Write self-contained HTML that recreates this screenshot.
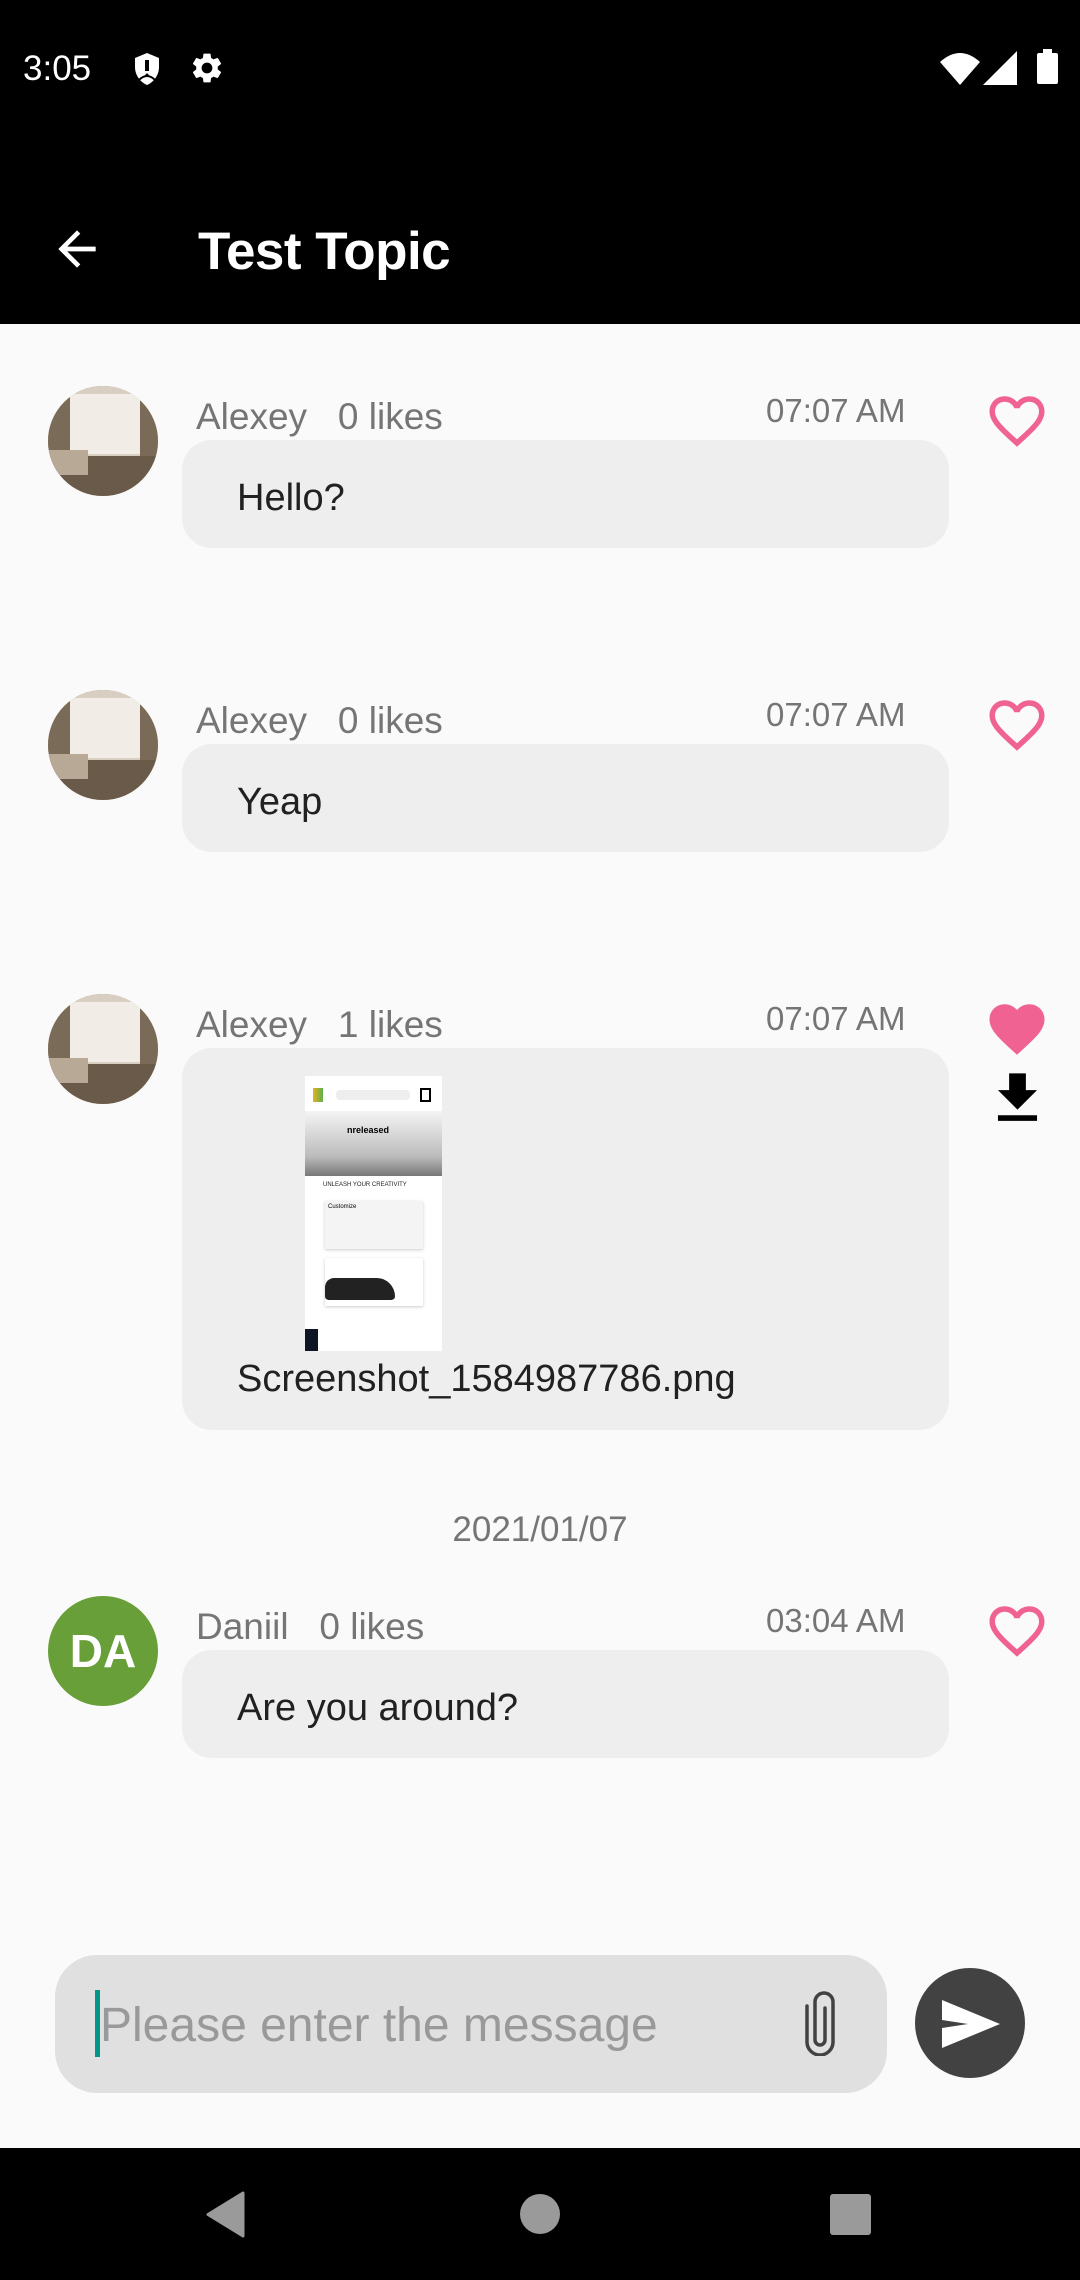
<!DOCTYPE html>
<html><head><meta charset="utf-8"><style>
*{margin:0;padding:0;box-sizing:border-box}
body{width:1080px;height:2280px;background:#fafafa;font-family:"Liberation Sans",sans-serif;position:relative;overflow:hidden}
.a{position:absolute;line-height:1;white-space:nowrap}
.av{position:absolute;left:48px;width:110px;height:110px;border-radius:50%;overflow:hidden;background:#8a7a66}
.av i{position:absolute;display:block}
.name{font-size:37px;color:#757575;left:196px}
.time{font-size:33px;color:#757575;left:766px}
.bub{position:absolute;left:182px;width:767px;background:#eeeeee;border-radius:30px}
.msg{font-size:38px;color:#212121;left:237px}
</style></head><body>
<div style="position:absolute;left:0;top:0;width:1080px;height:324px;background:#000"></div>
<div class="a" style="left:23px;top:51px;font-size:35px;color:#fff">3:05</div>
<svg style="position:absolute;left:133px;top:52px" width="28" height="34" viewBox="0 0 28 34"><path d="M14 1L2 6v9c0 8 5 15 12 18 7-3 12-10 12-18V6z" fill="#fff"/><rect x="12" y="8" width="4" height="11" fill="#000"/><path d="M6 28 Q14 20 22 28" stroke="#000" stroke-width="2" fill="none"/><circle cx="14" cy="23" r="1.5" fill="#000"/></svg>
<svg style="position:absolute;left:189px;top:50px" width="36" height="36" viewBox="0 0 24 24"><path fill="#fff" d="M19.14 12.94c.04-.3.06-.61.06-.94 0-.32-.02-.64-.07-.94l2.030-1.58a.49.49 0 0 0 .12-.61l-1.92-3.32a.49.49 0 0 0-.59-.22l-2.39.96c-.5-.38-1.03-.7-1.62-.94l-.36-2.54a.48.48 0 0 0-.48-.41h-3.84c-.24 0-.43.17-.47.41l-.36 2.54c-.59.24-1.13.57-1.62.94l-2.39-.96a.48.48 0 0 0-.59.22L2.74 8.87c-.12.21-.08.47.12.61l2.03 1.58c-.05.3-.09.63-.09.94s.02.64.07.94l-2.03 1.58a.49.49 0 0 0-.12.61l1.92 3.32c.12.22.37.29.59.22l2.39-.96c.5.38 1.03.7 1.62.94l.36 2.54c.05.24.24.41.48.41h3.84c.24 0 .44-.17.47-.41l.36-2.54c.59-.24 1.13-.56 1.62-.94l2.39.96c.22.08.47 0 .59-.22l1.92-3.32c.12-.22.07-.47-.12-.61l-2.01-1.58zM12 15.6c-1.98 0-3.6-1.62-3.6-3.6s1.62-3.6 3.6-3.6 3.6 1.62 3.6 3.6-1.62 3.6-3.6 3.6z"/></svg>
<svg style="position:absolute;left:940px;top:50px" width="40" height="35" viewBox="0 0 40 35"><path d="M0 12 Q20 -6 40 12 L20 35z" fill="#fff"/></svg>
<svg style="position:absolute;left:983px;top:51px" width="34" height="34" viewBox="0 0 34 34"><path d="M0 34L34 0V34z" fill="#fff"/></svg>
<div style="position:absolute;left:1037px;top:53px;width:21px;height:31px;background:#fff;border-radius:2px"></div>
<div style="position:absolute;left:1043px;top:49px;width:9px;height:5px;background:#fff"></div>
<svg style="position:absolute;left:49px;top:221px" width="56" height="56" viewBox="0 0 24 24"><path fill="#fff" d="M20 11H7.83l5.59-5.59L12 4l-8 8 8 8 1.41-1.41L7.83 13H20v-2z"/></svg>
<div class="a" style="left:198px;top:225px;font-size:53px;color:#fff;font-weight:bold;letter-spacing:-0.5px">Test Topic</div>

<!-- avatars -->
<div class="av" style="top:386px"><i style="left:0;top:0;width:110px;height:110px;background:#d8cfc2"></i><i style="left:22px;top:8px;width:70px;height:60px;background:#f1ece6"></i><i style="left:0;top:10px;width:22px;height:60px;background:#7a6a58"></i><i style="left:92px;top:10px;width:18px;height:60px;background:#7a6a58"></i><i style="left:0;top:70px;width:110px;height:40px;background:#6a5a4a"></i><i style="left:0;top:64px;width:40px;height:25px;background:#b7a995"></i></div>
<div class="av" style="top:690px"><i style="left:0;top:0;width:110px;height:110px;background:#d8cfc2"></i><i style="left:22px;top:8px;width:70px;height:60px;background:#f1ece6"></i><i style="left:0;top:10px;width:22px;height:60px;background:#7a6a58"></i><i style="left:92px;top:10px;width:18px;height:60px;background:#7a6a58"></i><i style="left:0;top:70px;width:110px;height:40px;background:#6a5a4a"></i><i style="left:0;top:64px;width:40px;height:25px;background:#b7a995"></i></div>
<div class="av" style="top:994px"><i style="left:0;top:0;width:110px;height:110px;background:#d8cfc2"></i><i style="left:22px;top:8px;width:70px;height:60px;background:#f1ece6"></i><i style="left:0;top:10px;width:22px;height:60px;background:#7a6a58"></i><i style="left:92px;top:10px;width:18px;height:60px;background:#7a6a58"></i><i style="left:0;top:70px;width:110px;height:40px;background:#6a5a4a"></i><i style="left:0;top:64px;width:40px;height:25px;background:#b7a995"></i></div>

<!-- msg1 -->
<div class="a name" style="top:398px">Alexey&nbsp;&nbsp;&nbsp;0 likes</div>
<div class="a time" style="top:394px">07:07 AM</div>
<div class="bub" style="top:440px;height:108px"></div>
<div class="a msg" style="top:479px">Hello?</div>
<svg style="position:absolute;left:984px;top:388px" width="66" height="66" viewBox="0 0 24 24"><path fill="#f06292" d="M16.5 3c-1.74 0-3.41.81-4.5 2.09C10.91 3.81 9.24 3 7.5 3 4.42 3 2 5.42 2 8.5c0 3.78 3.4 6.86 8.55 11.54L12 21.35l1.45-1.32C18.6 15.36 22 12.28 22 8.5 22 5.42 19.58 3 16.5 3zm-4.4 15.55l-.1.1-.1-.1C7.14 14.24 4 11.39 4 8.5 4 6.5 5.5 5 7.5 5c1.54 0 3.04.99 3.57 2.36h1.87C13.46 5.99 14.96 5 16.5 5c2 0 3.5 1.5 3.5 3.5 0 2.89-3.14 5.74-7.9 10.05z"/></svg>

<!-- msg2 -->
<div class="a name" style="top:702px">Alexey&nbsp;&nbsp;&nbsp;0 likes</div>
<div class="a time" style="top:698px">07:07 AM</div>
<div class="bub" style="top:744px;height:108px"></div>
<div class="a msg" style="top:783px">Yeap</div>
<svg style="position:absolute;left:984px;top:692px" width="66" height="66" viewBox="0 0 24 24"><path fill="#f06292" d="M16.5 3c-1.74 0-3.41.81-4.5 2.09C10.91 3.81 9.24 3 7.5 3 4.42 3 2 5.42 2 8.5c0 3.78 3.4 6.86 8.55 11.54L12 21.35l1.45-1.32C18.6 15.36 22 12.28 22 8.5 22 5.42 19.58 3 16.5 3zm-4.4 15.55l-.1.1-.1-.1C7.14 14.24 4 11.39 4 8.5 4 6.5 5.5 5 7.5 5c1.54 0 3.04.99 3.57 2.36h1.87C13.46 5.99 14.96 5 16.5 5c2 0 3.5 1.5 3.5 3.5 0 2.89-3.14 5.74-7.9 10.05z"/></svg>

<!-- msg3 -->
<div class="a name" style="top:1006px">Alexey&nbsp;&nbsp;&nbsp;1 likes</div>
<div class="a time" style="top:1002px">07:07 AM</div>
<div class="bub" style="top:1048px;height:382px"></div>
<div style="position:absolute;left:305px;top:1076px;width:137px;height:275px;background:#fff;overflow:hidden">
  <div style="position:absolute;left:8px;top:12px;width:10px;height:14px;background:linear-gradient(90deg,#e9b022,#5bb04b)"></div>
  <div style="position:absolute;left:31px;top:14px;width:74px;height:10px;background:#eee;border-radius:4px"></div>
  <div style="position:absolute;left:115px;top:12px;width:11px;height:14px;border:2px solid #000"></div>
  <div style="position:absolute;left:0;top:35px;width:137px;height:65px;background:linear-gradient(#f5f5f5,#bbb 70%,#777)"></div>
  <div style="position:absolute;left:42px;top:50px;font-size:9px;font-weight:bold;line-height:1">nreleased</div>
  <div style="position:absolute;left:18px;top:106px;font-size:6px;line-height:1;color:#222">UNLEASH YOUR CREATIVITY</div>
  <div style="position:absolute;left:20px;top:125px;width:98px;height:48px;background:#f4f4f4;box-shadow:0 1px 3px #ccc"></div>
  <div style="position:absolute;left:23px;top:128px;font-size:6px;line-height:1">Customize</div>
  <div style="position:absolute;left:20px;top:182px;width:98px;height:48px;background:#fff;box-shadow:0 1px 3px #ccc"></div>
  <div style="position:absolute;left:20px;top:202px;width:70px;height:22px;background:#222;border-radius:10px 20px 4px 4px"></div>
  <div style="position:absolute;left:0;top:253px;width:13px;height:22px;background:#0e1626"></div>
</div>
<div class="a msg" style="top:1360px">Screenshot_1584987786.png</div>
<svg style="position:absolute;left:984px;top:996px" width="66" height="66" viewBox="0 0 24 24"><path fill="#f06292" d="M12 21.35l-1.45-1.32C5.4 15.36 2 12.28 2 8.5 2 5.42 4.42 3 7.5 3c1.74 0 3.41.81 4.5 2.09C13.09 3.81 14.76 3 16.5 3 19.58 3 22 5.42 22 8.5c0 3.78-3.4 6.86-8.55 11.54L12 21.35z"/></svg>
<svg style="position:absolute;left:984px;top:1065px" width="67" height="67" viewBox="0 0 24 24"><path fill="#000" d="M19 9h-4V3H9v6H5l7 7 7-7zM5 18v2h14v-2H5z"/></svg>

<div class="a" style="left:0;width:1080px;text-align:center;top:1512px;font-size:35px;color:#757575">2021/01/07</div>

<!-- msg4 -->
<div style="position:absolute;left:48px;top:1596px;width:110px;height:110px;border-radius:50%;background:#689f38;color:#fff;font-weight:bold;font-size:46px;line-height:110px;text-align:center">DA</div>
<div class="a name" style="top:1608px">Daniil&nbsp;&nbsp;&nbsp;0 likes</div>
<div class="a time" style="top:1604px">03:04 AM</div>
<div class="bub" style="top:1650px;height:108px"></div>
<div class="a msg" style="top:1689px">Are you around?</div>
<svg style="position:absolute;left:984px;top:1598px" width="66" height="66" viewBox="0 0 24 24"><path fill="#f06292" d="M16.5 3c-1.74 0-3.41.81-4.5 2.09C10.91 3.81 9.24 3 7.5 3 4.42 3 2 5.42 2 8.5c0 3.78 3.4 6.86 8.55 11.54L12 21.35l1.45-1.32C18.6 15.36 22 12.28 22 8.5 22 5.42 19.58 3 16.5 3zm-4.4 15.55l-.1.1-.1-.1C7.14 14.24 4 11.39 4 8.5 4 6.5 5.5 5 7.5 5c1.54 0 3.04.99 3.57 2.36h1.87C13.46 5.99 14.96 5 16.5 5c2 0 3.5 1.5 3.5 3.5 0 2.89-3.14 5.74-7.9 10.05z"/></svg>

<!-- input -->
<div style="position:absolute;left:55px;top:1955px;width:832px;height:138px;background:#e0e0e0;border-radius:42px"></div>
<div style="position:absolute;left:95px;top:1990px;width:5px;height:67px;background:#009688"></div>
<div class="a" style="left:100px;top:2002px;font-size:48px;color:#999">Please enter the message</div>
<svg style="position:absolute;left:800px;top:1990px" width="40" height="66" viewBox="0 0 40 66"><path d="M25 18V50a5 5 0 0 1-10 0V12a9 9 0 0 1 18 0V52a13 13 0 0 1-26 0V16" stroke="#424242" stroke-width="3.5" fill="none" stroke-linecap="round"/></svg>
<div style="position:absolute;left:915px;top:1968px;width:110px;height:110px;border-radius:50%;background:#424242"></div>
<svg style="position:absolute;left:942px;top:2000px" width="58" height="48" viewBox="0 0 58 48"><path d="M0 0L58 24 0 48V28L26 24 0 20z" fill="#fff"/></svg>

<!-- nav -->
<div style="position:absolute;left:0;top:2148px;width:1080px;height:132px;background:#000"></div>
<svg style="position:absolute;left:205px;top:2191px" width="40" height="47" viewBox="0 0 40 47"><path d="M38 2L3 23.5 38 45z" fill="#9a9a9a" stroke="#9a9a9a" stroke-width="3" stroke-linejoin="round"/></svg>
<div style="position:absolute;left:520px;top:2194px;width:40px;height:40px;border-radius:50%;background:#9a9a9a"></div>
<div style="position:absolute;left:830px;top:2194px;width:41px;height:41px;border-radius:3px;background:#9a9a9a"></div>
</body></html>
